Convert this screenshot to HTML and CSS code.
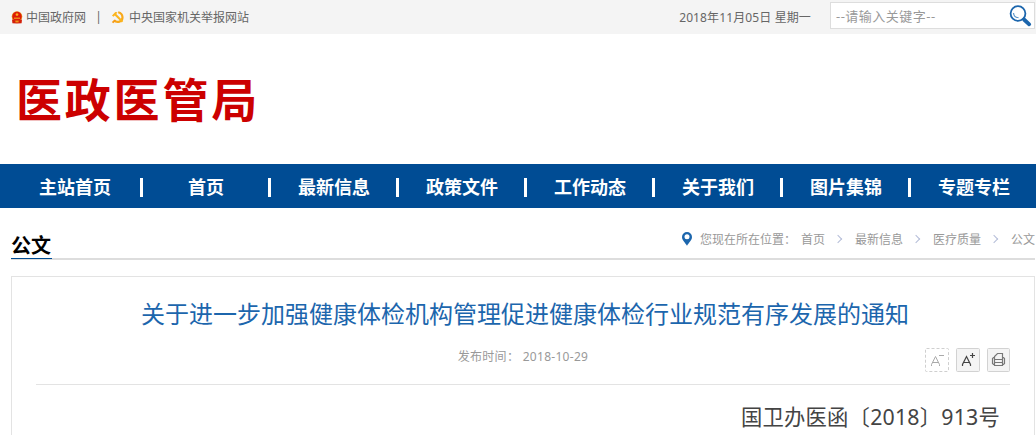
FILE: index.html
```html
<!DOCTYPE html>
<html lang="zh-CN">

<head>
    <meta charset="UTF-8">
    <meta name="viewport" content="width=device-width, initial-scale=1.0">
    <title>医政医管局</title>
    <link rel="stylesheet" href="styles.css">
</head>

<body>
    <!-- 顶部 -->
    <div class="top">
        <svg class="ico_gov" width="12" height="13" viewBox="0 0 12 13">
            <circle cx="6" cy="5.5" r="5.3" fill="#e8901c" />
            <circle cx="6" cy="5.4" r="4.6" fill="#dc1a08" />
            <path d="M6 1.6l.6 1.2 1.3.1-1 .9.3 1.3L6 4.5l-1.2.6.3-1.3-1-.9 1.3-.1z" fill="#ffb21c" />
            <path d="M3 6.6h6v1.2H3z" fill="#f3a01c" />
            <path d="M1 8.500l5 1.200 5-1.200-.4 3.700L6 12.500l-4.600-.3z" fill="#d3200a" />
            <path d="M4.400 9.600h3.200v1.800H4.400z" fill="#f0961c" />
        </svg>
        <a href="javascript:;">中国政府网</a>
        <span class="line">|</span>
        <svg class="ico_party" width="13" height="13" viewBox="0 0 13 13">
            <path d="M7.200 1.200c5.300 1.200 5.600 8 1.300 9.400-2 .7-4.200.1-5.300-1.300" fill="none" stroke="#f8a91b" stroke-width="2.200" />
            <path d="M1 4.400L4.300 1l2.200.3-1.200 1.600 6.900 7-1.400 1.500-7-7-1.400 1.300z" fill="#fbb51e" />
            <path d="M3.600 8.600l1.200 1.300-2.600 2.300L.8 10.900z" fill="#f59a16" />
        </svg>
        <a href="javascript:;">中央国家机关举报网站</a>
        <span class="date">2018年11月05日 星期一</span>
        <div class="search">
            <span>--请输入关键字--</span>
            <svg width="23" height="23" viewBox="0 0 23 23">
                <circle cx="9" cy="9.500" r="7.400" fill="#fff" stroke="#1c66ad" stroke-width="1.800" />
                <path d="M4.500 9c.3 3 2.300 4.600 5 4.600" fill="none" stroke="#5c95c9" stroke-width="1.200" />
                <path d="M15 15.500l5.200 4.800" stroke="#1c66ad" stroke-width="3.800" stroke-linecap="round" />
            </svg>
        </div>
    </div>

    <div class="logo">医政医管局</div>

    <!-- 导航 -->
    <ul class="nav">
        <li><a href="javascript:;">主站首页</a></li>
        <li><a href="javascript:;">首页</a></li>
        <li><a href="javascript:;">最新信息</a></li>
        <li><a href="javascript:;">政策文件</a></li>
        <li><a href="javascript:;">工作动态</a></li>
        <li><a href="javascript:;">关于我们</a></li>
        <li><a href="javascript:;">图片集锦</a></li>
        <li><a href="javascript:;">专题专栏</a></li>
    </ul>

    <!-- 当前位置 -->
    <div class="position">
        <h3>公文</h3>
        <div class="crumb">
            <svg width="10" height="14" viewBox="0 0 10 14">
                <path fill="#1c66ad" fill-rule="evenodd" d="M5 0a5 5 0 0 0-5 5c0 3.200 3 5.300 5 8.800C7 10.300 10 8.200 10 5a5 5 0 0 0-5-5zm0 2.300a2.500 2.500 0 1 1 0 5 2.500 2.500 0 0 1 0-5z" />
            </svg>
            <span class="here">您现在所在位置：</span>
            <a href="javascript:;">首页</a>
            <i></i>
            <a href="javascript:;">最新信息</a>
            <i></i>
            <a href="javascript:;">医疗质量</a>
            <i></i>
            <a href="javascript:;">公文</a>
        </div>
    </div>

    <!-- 正文 -->
    <div class="article">
        <h1>关于进一步加强健康体检机构管理促进健康体检行业规范有序发展的通知</h1>
        <div class="source">
            <span class="time">发布时间： 2018-10-29</span>
            <div class="tools">
                <svg width="24" height="24" viewBox="0 0 24 24" fill="none">
                    <rect x=".5" y=".5" width="23" height="23" rx="1" stroke="#cfcfcf" stroke-dasharray="3 2" />
                    <path d="M6.500 18v-1.500l4-8 4 8V18M8 14.500h5M14 7.500h5" stroke="#aaa" />
                </svg>
                <svg width="24" height="24" viewBox="0 0 24 24" fill="none">
                    <rect x=".5" y=".5" width="23" height="23" rx="1" fill="#f4f4f4" stroke="#d2d2d2" />
                    <path d="M6.500 18v-1.500l4-8 4 8V18M8 14.500h5M14 7.500h5M16.500 5v5" stroke="#444" stroke-width="1.200" />
                </svg>
                <svg width="23" height="24" viewBox="0 0 23 24" fill="none">
                    <rect x=".5" y=".5" width="22" height="23" rx="1" fill="#f4f4f4" stroke="#d2d2d2" />
                    <path d="M7.500 11V8.500l3-3h5V11M7.500 11.500h8M7.500 14.500h8M7.500 9.500h-1l-1 1v5l1 1h1M15.500 9.500h1l1 1v5l-1 1h-1M7.500 11v6.500h8V11" stroke="#777" stroke-width="1.200" />
                </svg>
            </div>
        </div>
        <p class="number">国卫办医函〔2018〕913号</p>
    </div>
</body>

</html>
```
FILE: styles.css
```css
* {
    margin: 0;
    padding: 0;
    list-style: none;
    text-decoration: none;
    box-sizing: border-box;
}

body {
    height: 435px;
    overflow: hidden;
    font: 12px "Noto Sans", "Noto Sans CJK SC", sans-serif;
    color: #666;
    background-color: #fff;
}

a {
    color: inherit;
}

/* 顶部 */
.top {
    display: flex;
    align-items: center;
    height: 34px;
    padding-left: 11px;
    line-height: 36px;
    background-color: #f4f4f4;
}

.top a,
.top .date {
    padding-top: 1px;
    white-space: nowrap;
}

.ico_gov {
    margin-right: 3px;
}

.ico_party {
    margin-right: 5px;
}

.top .line {
    width: 25px;
    text-align: center;
}

.top .date {
    margin-left: auto;
    margin-right: 19px;
    letter-spacing: .12px;
}

.search {
    display: flex;
    justify-content: space-between;
    width: 205px;
    height: 27px;
    margin-top: -3px;
    margin-right: 1px;
    padding: 1px 2px 0 5px;
    line-height: 24px;
    font-size: 13px;
    letter-spacing: .5px;
    color: #999;
    background-color: #fff;
    border: 1px solid #ddd;
}

/* 标志 */
.logo {
    height: 130px;
    padding-left: 16px;
    line-height: 130px;
    font-size: 46px;
    font-weight: 700;
    letter-spacing: 2.8px;
    color: #c00;
}

/* 导航 */
.nav {
    display: flex;
    height: 44px;
    padding-left: 8px;
    line-height: 48px;
    font-size: 18px;
    font-weight: 700;
    color: #fff;
    background-color: #004c94;
}

.nav li {
    display: flex;
    align-items: center;
    width: 128px;
    height: 44px;
    flex: none;
}

.nav li:first-child {
    width: 134px;
}

.nav li a {
    flex: 1;
    height: 46px;
    text-align: center;
}

.nav li:not(:last-child)::after {
    content: '';
    width: 3px;
    height: 19px;
    margin: 3px -1px 0 -2px;
    background-color: #fff;
}

/* 当前位置 */
.position {
    display: flex;
    justify-content: space-between;
    height: 52px;
    margin: 0 1px 0 11px;
    border-bottom: 2px solid #ddd;
}

.position h3 {
    width: 41px;
    height: 51px;
    padding-top: 24px;
    line-height: 28px;
    font-size: 20px;
    color: #000;
    border-bottom: 1px solid #004c94;
}

.crumb {
    display: flex;
    align-items: center;
    height: 62px;
    line-height: 64px;
    color: #999;
}

.crumb a,
.crumb .here {
    padding-top: 1px;
}

.crumb .here {
    margin: 0 5px 0 8px;
}

.crumb i {
    width: 6px;
    height: 6px;
    margin: 0 14px 0 10px;
    border: solid #b4bdd8;
    border-width: 1px 1px 0 0;
    transform: rotate(45deg);
}

/* 正文 */
.article {
    height: 170px;
    margin: 16px 1px 0 11px;
    padding: 0 24px;
    border: 1px solid #e3e3e3;
}

.article h1 {
    padding: 19px 0 1px 4px;
    line-height: 36px;
    font-size: 24px;
    font-weight: 400;
    text-align: center;
    color: #1c66ad;
    white-space: nowrap;
}

.source {
    display: grid;
    grid-template-columns: 1fr auto 1fr;
    height: 52px;
    padding-top: 15px;
    color: #999;
    border-bottom: 1px solid #e3e3e3;
}

.source .time {
    grid-column: 2;
    line-height: 18px;
    letter-spacing: .3px;
}

.tools {
    display: flex;
    justify-content: flex-end;
    gap: 7px;
}

.number {
    padding-right: 10px;
    line-height: 64px;
    font-size: 21.33px;
    letter-spacing: .2px;
    text-align: right;
    color: #444;
}
```
